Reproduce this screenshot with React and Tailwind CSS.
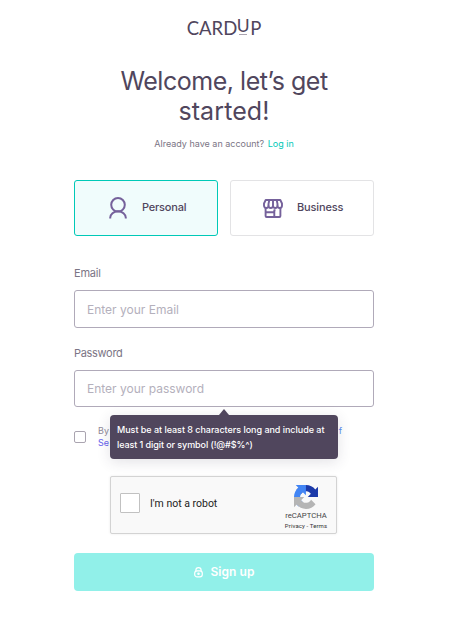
import React from 'react';

function Logo() {
  return (
    <div className="flex h-[19px] justify-center font-['Lato',sans-serif] text-[18.5px] leading-[21px] text-[#50465d]" aria-label="CardUp">
      <span>CARD</span>
      <span className="relative -top-[3px] -ml-px w-[14px] text-center text-[17.5px]">
        U
        <span className="absolute top-[19px] left-[3px] h-px w-[8px] bg-[#aaa4b0]" />
      </span>
      <span>P</span>
    </div>
  );
}

function PersonIcon() {
  return (
    <svg width="18" height="22" viewBox="0 0 18 22" fill="none" stroke="#75619b" strokeWidth="2">
      <circle cx="9" cy="7.8" r="6.8" />
      <path d="M1.2 21.5v-.7a7.8 6.5 0 0 1 15.6 0v.7" />
    </svg>
  );
}

function StoreIcon() {
  return (
    <svg width="20" height="19" viewBox="0 0 20 19" fill="none" stroke="#75619b" strokeWidth="1.9" strokeLinejoin="round">
      <path d="M2.7 1h14.6L19 4.5v2a2.25 2.5 0 0 1-4.5 0 2.25 2.5 0 0 1-4.5 0 2.25 2.5 0 0 1-4.5 0 2.25 2.5 0 0 1-4.5 0v-2Z" />
      <path d="M5.5 6.5V5L6.3 1M10 6.5V1M14.5 6.5V5L13.7 1M2.6 9V17a1 1 0 0 0 1 1h12.8a1 1 0 0 0 1-1V9M11.3 18V11.2h1.2M2.6 13.3h8.7" />
    </svg>
  );
}

function RecaptchaIcon() {
  return (
    <svg width="24" height="24" viewBox="0 0 64 64">
      <path fill="#1c3aa9" d="M64 31.955a33 33 0 0 0-.033-1.374V4.687l-7.16 7.16C50.948 4.674 42.033.093 32.05.093c-10.4 0-19.622 4.96-25.458 12.64l11.736 11.86a15.55 15.55 0 0 1 4.754-5.334c2.05-1.6 4.952-2.906 8.968-2.906.485 0 .86.057 1.135.163 4.976.393 9.288 3.14 11.828 7.124l-8.307 8.307L64 31.953" />
      <path fill="#4285f4" d="M31.862.094a33 33 0 0 0-1.373.035H4.594l7.16 7.16C4.58 13.147 0 22.06 0 32.046c0 10.4 4.96 19.622 12.64 25.458L24.5 45.768a15.55 15.55 0 0 1-5.334-4.754c-1.6-2.05-2.906-4.952-2.906-8.968 0-.485.057-.86.163-1.135.393-4.976 3.14-9.288 7.124-11.828l8.307 8.307L31.86.095" />
      <path fill="#b5b5b5" d="M.001 32.045a33 33 0 0 0 .033 1.374v25.894l7.16-7.16c5.86 7.173 14.774 11.754 24.76 11.754 10.4 0 19.622-4.96 25.458-12.64l-11.736-11.86a15.55 15.55 0 0 1-4.754 5.334c-2.05 1.6-4.952 2.906-8.968 2.906-.485 0-.86-.057-1.135-.163-4.976-.393-9.288-3.14-11.828-7.124l8.307-8.307c-10.522.04-22.4.066-27.295-.005" />
    </svg>
  );
}

function LockIcon() {
  return (
    <svg width="9" height="11" viewBox="0 0 9 11" fill="none" stroke="white" strokeWidth="1.2">
      <rect x="0.7" y="3.8" width="7.6" height="6" rx="2.4" />
      <path d="M1.9 4.2V3a2.6 2.3 0 0 1 5.2 0v1.2" />
      <circle cx="4.5" cy="6.8" r="0.7" fill="white" />
    </svg>
  );
}

export default function App() {
  return (
    <div className="h-[619px] w-[475px] overflow-hidden bg-white font-['Inter',sans-serif] text-[#50465d]">
      <main className="ml-[74px] flex w-[300px] flex-col pt-[18px]">
        <Logo />
        <h1 className="mt-[29px] text-center text-[25px] leading-[30px]">
          <span className="tracking-[-0.47px]">Welcome, let’s get</span>
          <br />
          <span className="tracking-[0.1px]">started!</span>
        </h1>
        <p className="mt-[11px] text-center text-[9px] leading-[14px] text-[#7b7585]">
          Already have an account? <a className="ml-px text-[#00c9b7]">Log in</a>
        </p>

        <div className="mt-[29px] flex gap-3">
          <button className="flex h-14 w-36 items-center rounded-[3px] border border-[#00c9b7] bg-[#f0fcfc] pl-[34px] text-[11px] font-medium tracking-[-0.2px]">
            <PersonIcon />
            <span className="ml-[15px] -mt-px">Personal</span>
          </button>
          <button className="flex h-14 w-36 items-center rounded-[3px] border border-[#e3e3e5] bg-white pl-8 text-[11px] font-medium tracking-[-0.15px]">
            <StoreIcon />
            <span className="ml-[14px] -mt-px">Business</span>
          </button>
        </div>

        <label className="mt-[29px] text-[11px] leading-4 tracking-[-0.2px] text-[#7b7585]">Email</label>
        <input
          className="mt-[9px] h-[38px] w-full rounded-[3px] border border-[#b0aab9] pl-3 text-[12px] placeholder:text-[#b4b0bc]"
          placeholder="Enter your Email"
        />
        <label className="mt-[17px] text-[11px] leading-4 tracking-[-0.3px] text-[#7b7585]">Password</label>
        <div className="relative mt-[9px]">
          <input
            className="block h-[37px] w-full rounded-[3px] border border-[#b0aab9] pl-3 text-[12px] placeholder:text-[#b4b0bc]"
            placeholder="Enter your password"
          />
          <div className="absolute top-[45px] left-[36px] z-10 h-11 w-[228px] rounded-[4px] bg-[#50465d] pt-[7px] pl-[7px] text-[9px] leading-[15px] font-medium tracking-[-0.03px] text-white shadow-[0_3px_14px_rgba(60,50,80,0.14)]">
            <svg className="absolute -top-[6px] left-[109px]" width="10" height="6" viewBox="0 0 10 6">
              <path d="M5 0 10 6H0Z" fill="#50465d" />
            </svg>
            Must be at least 8 characters long and include at
            <br />
            <span className="tracking-[-0.08px]">least 1 digit or symbol (!@#$%^)</span>
          </div>
        </div>

        <div className="mt-[18px] flex h-6 items-center">
          <span className="h-3 w-3 shrink-0 rounded-[2px] border border-[#aaa4b0]" />
          <p className="ml-3 w-[270px] text-[9px] leading-3 whitespace-nowrap text-[#8f8998]">
            <span className="flex w-[244px] justify-between">
              <span>By</span>
              <a className="text-[#5b8def]">f</a>
            </span>
            <a className="text-[#6561ed]">Se</a>
          </p>
        </div>

        <div className="mt-[27px] ml-[36px] flex h-[58px] w-[227px] items-center rounded-[2px] border border-[#d3d3d3] bg-[#f9f9f9] pl-[9px] font-['Roboto',sans-serif] text-black shadow-[0_0_3px_rgba(0,0,0,0.08)]">
          <span className="-mt-1 h-5 w-5 shrink-0 rounded-[1px] border border-[#c1c1c1] bg-white" />
          <span className="-mt-[3px] ml-[10px] w-[129px] text-[10.5px] text-[#222]">I'm not a robot</span>
          <div className="mt-[3px] flex w-[54px] flex-col items-center">
            <RecaptchaIcon />
            <span className="mt-[2px] text-[7.7px] leading-[9px] text-[#444]">reCAPTCHA</span>
            <span className="mt-[2px] text-[6px] leading-[7px] tracking-[0.1px] whitespace-nowrap text-[#333]">Privacy - Terms</span>
          </div>
        </div>

        <button className="mt-[19px] flex h-[38px] w-full items-center justify-center rounded-[4px] bg-[#91f0e9] pl-px text-[12px] font-semibold text-white">
          <LockIcon />
          <span className="ml-[7px] tracking-[0.05px]">Sign up</span>
        </button>
      </main>
    </div>
  );
}
